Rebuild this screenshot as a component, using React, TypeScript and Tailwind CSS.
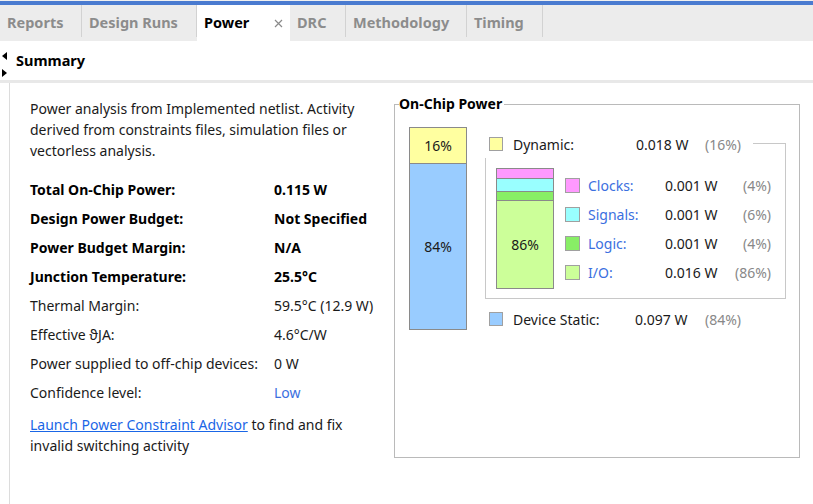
import React from "react";

const tabs = [
  { label: "Reports", w: "w-[82px]" },
  { label: "Design Runs", w: "w-[115px]" },
  { label: "Power", w: "w-[93px]", active: true },
  { label: "DRC", w: "w-[56px]" },
  { label: "Methodology", w: "w-[121px]" },
  { label: "Timing", w: "w-[76px]" },
];

const summaryRows: { label: string; value: string; bold?: boolean; link?: boolean }[] = [
  { label: "Total On-Chip Power:", value: "0.115 W", bold: true },
  { label: "Design Power Budget:", value: "Not Specified", bold: true },
  { label: "Power Budget Margin:", value: "N/A", bold: true },
  { label: "Junction Temperature:", value: "25.5°C", bold: true },
  { label: "Thermal Margin:", value: "59.5°C (12.9 W)" },
  { label: "Effective ϑJA:", value: "4.6°C/W" },
  { label: "Power supplied to off-chip devices:", value: "0 W" },
  { label: "Confidence level:", value: "Low", link: true },
];

const dynamicParts = [
  { label: "Clocks:", value: "0.001 W", pct: "(4%)", color: "bg-[#ff99ff]" },
  { label: "Signals:", value: "0.001 W", pct: "(6%)", color: "bg-[#99ffff]" },
  { label: "Logic:", value: "0.001 W", pct: "(4%)", color: "bg-[#88ee66]" },
  { label: "I/O:", value: "0.016 W", pct: "(86%)", color: "bg-[#ccff99]" },
];

function CloseIcon() {
  return (
    <svg width="9" height="9" viewBox="0 0 9 9" className="ml-auto mr-[7px]">
      <path d="M1 1 L8 8 M8 1 L1 8" stroke="#8a8a8a" strokeWidth="1.2" />
    </svg>
  );
}

function TabBar() {
  return (
    <div className="flex h-[36px] bg-[#ececec]">
      {tabs.map((t) => (
        <div
          key={t.label}
          className={`${t.w} flex items-start ${t.active ? "bg-white" : ""}`}
        >
          <div className="flex h-full flex-1 items-center pl-[7px]">
            <span
              className={`text-[14.5px] font-bold ${
                t.active ? "text-black" : "text-[#8c8c8c]"
              }`}
            >
              {t.label}
            </span>
            {t.active && <CloseIcon />}
          </div>
          {!t.active && <div className="h-[32px] w-px bg-[#d2d2d2]" />}
        </div>
      ))}
    </div>
  );
}

function SummaryHeader() {
  return (
    <div className="flex h-[39px] items-center">
      <div className="flex w-[9px] flex-col items-center gap-[9px] pt-[7px]">
        <svg width="5" height="8" viewBox="0 0 5 8">
          <path d="M5 0 L0 4 L5 8 Z" fill="#000" />
        </svg>
        <svg width="5" height="8" viewBox="0 0 5 8">
          <path d="M0 0 L5 4 L0 8 Z" fill="#000" />
        </svg>
      </div>
      <span className="ml-[7px] pt-[1px] text-[14.5px] font-bold text-black">Summary</span>
    </div>
  );
}

function SummaryColumn() {
  return (
    <div className="w-[384px] shrink-0 pl-[20px] pt-[15px] text-[14px] text-[#1a1a1a]">
      <p className="leading-[21px]">
        Power analysis from Implemented netlist. Activity derived from
        constraints files, simulation files or vectorless analysis.
      </p>
      <div className="mt-[14px]">
        {summaryRows.map((r) => (
          <div key={r.label} className="flex h-[29px] items-center whitespace-nowrap">
            <span className={`w-[244px] ${r.bold ? "font-bold text-black" : ""}`}>
              {r.label}
            </span>
            <span
              className={
                r.bold
                  ? "font-bold text-black"
                  : r.link
                    ? "text-[#3b6fe0]"
                    : ""
              }
            >
              {r.value}
            </span>
          </div>
        ))}
      </div>
      <p className="mt-[7px] w-[330px] leading-[21px]">
        <span className="text-[#1a66e6] underline">Launch Power Constraint Advisor</span>{" "}
        to find and fix invalid switching activity
      </p>
    </div>
  );
}

function Swatch({ color, size }: { color: string; size: string }) {
  return <div className={`${size} ${color} shrink-0 border border-[#a0a0a0]`} />;
}

function OnChipPower() {
  return (
    <div className="relative mt-[21px] h-[354px] w-[406px] shrink-0 border border-[#bababa] text-[14px] text-[#1a1a1a]">
      <span className="absolute left-[4px] top-[-12px] bg-white pr-[2px] text-[14px] font-bold text-black">
        On-Chip Power
      </span>
      <div className="flex pl-[14px] pt-[22px]">
        <div className="flex h-[203px] w-[58px] flex-col border border-[#8a8a8a]">
          <div className="flex h-[36px] items-center justify-center border-b border-[#8a8a8a] bg-[#ffffa0]">
            16%
          </div>
          <div className="flex flex-1 items-center justify-center bg-[#99ccff]">84%</div>
        </div>

        <div className="ml-[18px] w-[301px]">
          <div className="flex h-[31px] items-start pt-[7px]">
            <div className="flex h-[20px] items-center pl-[4px]">
              <Swatch color="bg-[#ffffa0]" size="w-[14px] h-[14px]" />
              <span className="ml-[10px] w-[123px]">Dynamic:</span>
              <span className="w-[69px]">0.018 W</span>
              <span className="text-[#888]">(16%)</span>
            </div>
            <div className="ml-[12px] mt-[9px] h-[15px] flex-1 border-t border-r border-[#c8c8c8]" />
          </div>

          <div className="flex border-x border-b border-[#c8c8c8] pb-[9px] pl-[10px] pt-[10px]">
            <div className="flex h-[121px] w-[58px] flex-col border border-[#8a8a8a]">
              <div className="h-[10px] border-b border-[#8a8a8a] bg-[#ff99ff]" />
              <div className="h-[13px] border-b border-[#8a8a8a] bg-[#99ffff]" />
              <div className="h-[9px] border-b border-[#8a8a8a] bg-[#88ee66]" />
              <div className="flex flex-1 items-center justify-center bg-[#ccff99]">86%</div>
            </div>
            <div className="ml-[11px] pt-[3px]">
              {dynamicParts.map((p) => (
                <div key={p.label} className="flex h-[29px] items-center">
                  <Swatch color={p.color} size="w-[15px] h-[15px]" />
                  <span className="ml-[8px] w-[77px] text-[#3b6fe0]">{p.label}</span>
                  <span className="w-[55px]">{p.value}</span>
                  <span className="w-[51px] text-right text-[#888]">{p.pct}</span>
                </div>
              ))}
            </div>
          </div>

          <div className="mt-[10px] flex h-[20px] items-center pl-[4px]">
            <Swatch color="bg-[#99ccff]" size="w-[14px] h-[14px]" />
            <span className="ml-[10px] w-[122px]">Device Static:</span>
            <span className="w-[70px]">0.097 W</span>
            <span className="text-[#888]">(84%)</span>
          </div>
        </div>
      </div>
    </div>
  );
}

export default function App() {
  return (
    <div
      className="h-[504px] w-[813px] overflow-hidden bg-white"
      style={{ fontFamily: '"Noto Sans", "Open Sans", sans-serif' }}
    >
      <div className="h-px bg-[#f0f0f0]" />
      <div className="h-[4px] bg-[#4a7bd0]" />
      <TabBar />
      <SummaryHeader />
      <div className="h-[3px] bg-[#e8e8e8]" />
      <div className="ml-[9px] flex h-[421px] border-l border-[#dcdcdc]">
        <SummaryColumn />
        <OnChipPower />
      </div>
    </div>
  );
}
